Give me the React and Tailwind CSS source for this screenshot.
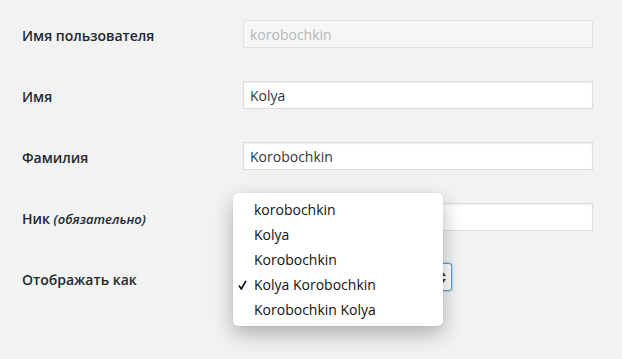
const FONT = { fontFamily: '"Open Sans", "Noto Sans", sans-serif' };

const OPTIONS = ['korobochkin', 'Kolya', 'Korobochkin', 'Kolya Korobochkin', 'Korobochkin Kolya'];
const SELECTED = 'Kolya Korobochkin';

function Row({ label, children }) {
  return (
    <div className="flex items-start h-[61px]">
      <div className="w-[221px] shrink-0 mt-[6px] text-[14px] leading-5 font-semibold text-[#23282d]">
        {label}
      </div>
      <div className="relative">{children}</div>
    </div>
  );
}

function TextInput({ value, disabled }) {
  return (
    <div
      className={`w-[350px] h-[28px] flex items-center px-[6px] border text-[14px] ${
        disabled
          ? 'bg-[#f6f6f6] border-[#e3e3e3] text-[#b4b8bb]'
          : 'bg-white border-[#dddddd] text-[#32373c] shadow-[inset_0_1px_2px_rgba(0,0,0,0.07)]'
      }`}
    >
      {value}
    </div>
  );
}

function Dropdown() {
  return (
    <div className="absolute left-[-10px] top-[-71px] w-[210px] py-[4px] bg-white rounded-[5px] shadow-[0_8px_20px_rgba(0,0,0,0.28),0_0_1px_rgba(0,0,0,0.2)] z-10">
      {OPTIONS.map((opt) => (
        <div key={opt} className="relative h-[25px] flex items-center pl-[21px] text-[14px] text-[#111]">
          {opt === SELECTED && (
            <svg className="absolute left-[5px] top-[8px]" width="9" height="10" viewBox="0 0 9 10">
              <path d="M1 5.5 L3.3 9 L8 0.8" fill="none" stroke="#111" strokeWidth="1.7" strokeLinejoin="round" />
            </svg>
          )}
          {opt}
        </div>
      ))}
    </div>
  );
}

export default function App() {
  return (
    <div className="w-[622px] h-[359px] bg-[#f2f2f2] overflow-hidden" style={FONT}>
      <div className="pl-[22px] pt-[20px]">
        <Row label="Имя пользователя">
          <TextInput value="korobochkin" disabled />
        </Row>
        <Row label="Имя">
          <TextInput value="Kolya" />
        </Row>
        <Row label="Фамилия">
          <TextInput value="Korobochkin" />
        </Row>
        <Row
          label={
            <span>
              Ник <span className="italic text-[13px]">(обязательно)</span>
            </span>
          }
        >
          <TextInput value="korobochkin" />
        </Row>
        <Row label="Отображать как">
          <div className="relative -mt-px w-[209px] h-[28px] flex items-center px-[6px] bg-white border border-[#5b9dd9] rounded-[3px] shadow-[0_0_2px_rgba(30,140,190,0.8)] text-[14px] text-[#32373c]">
            Kolya Korobochkin
            <svg className="absolute right-[4px] top-[7px]" width="8" height="13" viewBox="0 0 8 13">
              <path d="M1 5 L4 1 L7 5 Z M1 8 L4 12 L7 8 Z" fill="#333" />
            </svg>
          </div>
          <Dropdown />
        </Row>
      </div>
    </div>
  );
}
